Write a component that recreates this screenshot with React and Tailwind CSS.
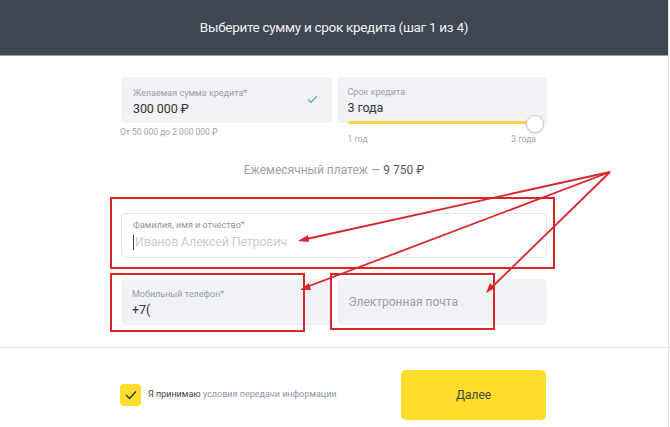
import React from "react";

export default function App() {
  return (
    <div
      className="relative w-[670px] h-[427px] overflow-hidden bg-white"
      style={{ fontFamily: "Roboto, 'Liberation Sans', sans-serif" }}
    >
      <div className="w-[669px] h-[427px] border-r border-[#e4e6ea] flex flex-col">
        <div className="h-[56px] bg-[#3f4654] border-b border-[#9aa0a8] flex items-center justify-center">
          <span className="text-[13.5px] text-[#eef0f3] tracking-[-0.3px] pb-[1px]">
            Выберите сумму и срок кредита (шаг 1 из 4)
          </span>
        </div>

        <div className="w-[426px] ml-[121px] flex flex-col">
          {/* top fields */}
          <div className="grid grid-cols-2 gap-[5px] mt-[21px]">
            <div className="flex flex-col">
              <div className="h-[46px] rounded-[5px] bg-[#f0f2f5] pl-[12px] pr-[14px] flex items-center justify-between">
                <div className="flex flex-col pt-[3px]">
                  <span className="text-[9px] leading-[12px] text-[#9aa0a8]">Желаемая сумма кредита*</span>
                  <span className="text-[12.5px] leading-[16px] text-[#333] mt-[2px] tracking-[-0.1px]">300 000 ₽</span>
                </div>
                <svg width="11" height="9" viewBox="0 0 11 9" className="mb-[2px]">
                  <path d="M1 4.5 L4 7.5 L10 1" fill="none" stroke="#4fb39a" strokeWidth="1.2" />
                </svg>
              </div>
              <span className="text-[8.5px] text-[#a0a6ae] mt-[3px] -ml-[1px]">От 50 000 до 2 000 000 ₽</span>
            </div>
            <div className="flex flex-col">
              <div className="relative h-[46px] rounded-t-[5px] bg-[#f0f2f5] pl-[11px] flex flex-col justify-center">
                <span className="text-[9px] leading-[12px] text-[#9aa0a8] pt-[1px]">Срок кредита</span>
                <span className="text-[12.5px] leading-[16px] text-[#333] mt-[2px] tracking-[-0.1px]">3 года</span>
                <div className="absolute left-[11px] right-[14px] bottom-[-1px] h-[3px] bg-[#f7d44a] rounded-full" />
                <div className="absolute right-[3px] bottom-[-10px] w-[18px] h-[18px] rounded-full bg-white border border-[#c9ccd1] shadow-[0_1px_2px_rgba(0,0,0,0.15)]" />
              </div>
              <div className="flex justify-between pl-[11px] pr-[11px] mt-[10px]">
                <span className="text-[8.5px] text-[#a0a6ae]">1 год</span>
                <span className="text-[8.5px] text-[#a0a6ae]">3 года</span>
              </div>
            </div>
          </div>

          <div className="text-center mt-[15px] text-[12px] text-[#9a9fa6]">
            Ежемесячный платеж — <span className="text-[#555a61]">9 750 ₽</span>
          </div>

          {/* FIO */}
          <div className="mt-[34px] h-[45px] rounded-[5px] border border-[#e3e6ea] bg-white pl-[11px] flex flex-col justify-center">
            <span className="text-[9px] leading-[12px] text-[#8f959d]">Фамилия, имя и отчество*</span>
            <div className="flex items-center mt-[2px]">
              <span className="w-[1px] h-[15px] bg-[#444] mr-[1px]" />
              <span className="text-[12.5px] leading-[18px] text-[#c9cdd2] tracking-[-0.2px]">Иванов Алексей Петрович</span>
            </div>
          </div>

          {/* phone / email */}
          <div className="grid grid-cols-2 gap-[5px] mt-[21px]">
            <div className="h-[46px] rounded-[5px] bg-[#f0f2f5] pl-[11px] flex flex-col justify-center">
              <span className="text-[9px] leading-[12px] text-[#9aa0a8] pt-[2px]">Мобильный телефон*</span>
              <span className="text-[12.5px] leading-[16px] text-[#333] mt-[2px]">+7(</span>
            </div>
            <div className="h-[46px] rounded-[5px] bg-[#f0f2f5] pl-[12px] flex items-center">
              <span className="text-[12px] text-[#9aa0a8]">Электронная почта</span>
            </div>
          </div>
        </div>

        <div className="mt-[22px] h-[1px] bg-[#e4e6ea]" />

        <div className="w-[426px] ml-[120px] flex items-center justify-between mt-[22px]">
          <div className="flex items-center gap-[7px]">
            <div className="w-[21px] h-[22px] rounded-[4px] bg-[#ffdd2d] flex items-center justify-center">
              <svg width="12" height="10" viewBox="0 0 12 10">
                <path d="M1 5 L4.5 8.5 L11 1.5" fill="none" stroke="#333" strokeWidth="1.4" />
              </svg>
            </div>
            <span className="text-[9px] text-[#444]">
              Я принимаю <span className="text-[#8a96a6]">условия передачи информации</span>
            </span>
          </div>
          <div className="w-[145px] h-[50px] rounded-[5px] bg-[#ffdd2d] flex items-center justify-center">
            <span className="text-[12px] text-[#444]">Далее</span>
          </div>
        </div>
      </div>

      {/* annotation boxes */}
      <div className="absolute left-[110px] top-[197px] w-[445px] h-[72px] border-2 border-[#d9262b]" />
      <div className="absolute left-[110px] top-[273px] w-[195px] h-[59px] border-2 border-[#d9262b]" />
      <div className="absolute left-[330px] top-[273px] w-[165px] h-[57px] border-2 border-[#d9262b]" />

      <svg className="absolute inset-0" width="670" height="427" viewBox="0 0 670 427">
        <g stroke="#d9262b" strokeWidth="1.8" fill="#d9262b">
          <line x1="610" y1="172" x2="302" y2="240" />
          <line x1="610" y1="172" x2="304" y2="288" />
          <line x1="610" y1="172" x2="489" y2="290" />
          <polygon points="298,241 308,235 309,242" stroke="none" />
          <polygon points="300,290 309,283 311,290" stroke="none" />
          <polygon points="486,293 490,283 495,288" stroke="none" />
        </g>
      </svg>
    </div>
  );
}
